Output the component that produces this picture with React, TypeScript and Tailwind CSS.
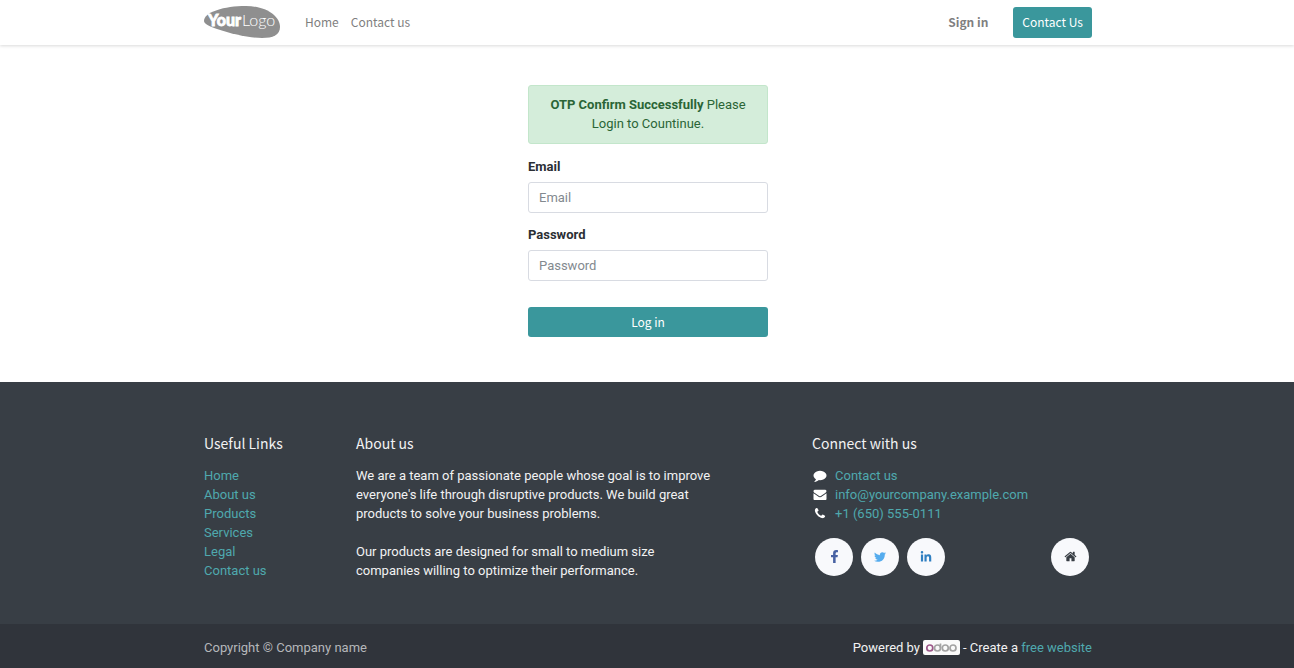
import React from 'react';
import { FaFacebookF, FaLinkedinIn, FaTwitter } from 'react-icons/fa';

interface IconProps {
  className?: string;
}

const usefulLinks = ['Home', 'About us', 'Products', 'Services', 'Legal', 'Contact us'];

const CommentIcon: React.FC<IconProps> = ({ className }) => (
  <svg className={className} viewBox="0 0 1792 1792" fill="currentColor" aria-hidden="true">
    <path d="M1792 896q0 174-120 321.5t-326 233-450 85.5q-70 0-145-8-198 175-460 242-49 14-114 22h-5q-15 0-27-10.5t-16-27.5v-1q-3-4-.5-12t2-10 4.5-9.5l6-9 7-8.5 8-9q7-8 31-34.5t34.5-38 31-39.5 32.5-51 27-59 26-76q-157-89-247.5-220t-90.5-281q0-174 120-321.5t326-233 450-85.5 450 85.5 326 233 120 321.5z" />
  </svg>
);

const EnvelopeIcon: React.FC<IconProps> = ({ className }) => (
  <svg className={className} viewBox="0 0 1792 1792" fill="currentColor" aria-hidden="true">
    <path d="M1792 710v794q0 66-47 113t-113 47h-1472q-66 0-113-47t-47-113v-794q44 49 101 87 362 246 497 345 57 42 92.5 65.5t94.5 48 110 24.5h2q51 0 110-24.5t94.5-48 92.5-65.5q170-123 498-345 57-39 100-87zm0-294q0 79-49 151t-122 123q-376 261-468 325-10 7-42.5 31t-54 38.5-52 32.5-57.5 27-50 9h-2q-23 0-50-9t-57.5-27-52-32.5-54-38.5-42.5-31q-91-64-262-182.5t-205-142.5q-62-42-117-115.5t-55-136.5q0-78 41.5-130t118.5-52h1472q65 0 112.5 47t47.5 113z" />
  </svg>
);

const PhoneIcon: React.FC<IconProps> = ({ className }) => (
  <svg className={className} viewBox="0 0 1792 1792" fill="currentColor" aria-hidden="true">
    <path d="M1600 1240q0 27-10 70.5t-21 68.5q-21 50-122 106-94 51-186 51-27 0-53-3.5t-57.5-12.5-47-14.5-55.5-20.5-49-18q-98-35-175-83-127-79-264-216t-216-264q-48-77-83-175-3-9-18-49t-20.5-55.5-14.5-47-12.5-57.5-3.5-53q0-92 51-186 56-101 106-122 25-11 68.5-21t70.5-10q14 0 21 3 18 6 53 76 11 19 30 54t35 63.5 31 53.5q3 4 17.5 25t21.5 35.5 7 28.5q0 20-28.5 50t-62 55-62 53-28.5 46q0 9 5 22.5t8.5 20.5 14 24 11.5 19q76 137 174 235t235 174q2 1 19 11.5t24 14 20.5 8.5 22.5 5q18 0 46-28.5t53-62 55-62 50-28.5q14 0 28.5 7t35.5 21.5 25 17.5q25 15 53.5 31t63.5 35 54 30q70 35 76 53 3 7 3 21z" />
  </svg>
);

const HomeIcon: React.FC<IconProps> = ({ className }) => (
  <svg className={className} viewBox="0 0 1792 1792" fill="currentColor" aria-hidden="true">
    <path d="M1472 992v480q0 26-19 45t-45 19h-384v-384h-256v384h-384q-26 0-45-19t-19-45v-480q0-1 .5-3t.5-3l575-474 575 474q1 2 1 6zm223-69l-62 74q-8 9-21 11h-3q-13 0-21-7l-692-577-692 577q-12 8-24 7-13-2-21-11l-62-74q-8-10-7-23.5t11-21.5l719-599q32-26 76-26t76 26l244 204v-195q0-14 9-23t23-9h192q14 0 23 9t9 23v408l219 182q10 8 11 21.5t-7 23.5z" />
  </svg>
);

const Logo: React.FC = () => (
  <svg className="w-[76px] h-8" viewBox="0 0 76 32" role="img" aria-label="Your Logo">
    <path d="M0 15C0 6 20 0 42 0C62 0 76 10 76 21C76 29 69 32 58 32C45 32 28 28 13 23C5 20 0 18 0 15Z" fill="#8f8f8f" />
    <text x="4" y="20" fill="#fff" stroke="#fff" strokeWidth="0.8" fontFamily="Lato, sans-serif" fontWeight="900" fontSize="16">Your</text>
    <text x="38" y="20" fill="#fff" fontFamily="Lato, sans-serif" fontWeight="300" fontSize="16">Logo</text>
  </svg>
);

const OdooBadge: React.FC = () => (
  <svg className="w-[37px] h-[15px]" viewBox="0 0 37 15" role="img" aria-label="odoo">
    <rect width="37" height="15" rx="2" fill="#fafafa" />
    <g fill="none" strokeWidth="1.7">
      <circle cx="6.8" cy="8" r="3" stroke="#9c5789" />
      <g stroke="#a3a3a3">
        <circle cx="14.5" cy="8" r="3" />
        <path d="M17.500 3.500v4.500" />
        <circle cx="22.300" cy="8" r="3" />
        <circle cx="30" cy="8" r="3" />
      </g>
    </g>
  </svg>
);

const Header: React.FC = () => (
  <header className="bg-white shadow-[0_1px_3px_rgba(0,0,0,0.15)]">
    <div className="max-w-[914px] mx-auto pl-[14px] pr-3 pb-px h-[45px] flex items-center font-['Noto_Sans_CJK_SC',sans-serif] text-xs text-[#7f7f7f]">
      <a href="#home" className="mr-[25px]"><Logo /></a>
      <nav className="flex gap-3">
        <a href="#home">Home</a>
        <a href="#contact">Contact us</a>
      </nav>
      <a href="#signin" className="ml-auto font-bold">Sign in</a>
      <a href="#contact" className="ml-[25px] px-[9px] h-[31px] flex items-center rounded-[3px] bg-[#3a979c] text-white">Contact Us</a>
    </div>
  </header>
);

interface FieldProps {
  id: string;
  label: string;
  type: string;
}

const Field: React.FC<FieldProps> = ({ id, label, type }) => (
  <div className="mb-3">
    <label htmlFor={id} className="block mb-[6px] font-bold">{label}</label>
    <input
      id={id}
      type={type}
      placeholder={label}
      className="block w-full h-[31px] px-[10px] bg-white border border-[#d8dbe2] rounded-[3px] placeholder:text-[#83898f] outline-none focus:border-[#3a979c]"
    />
  </div>
);

const LoginForm: React.FC = () => (
  <form className="w-[242px] pl-[2px] mx-auto pt-10 pb-[45px]" onSubmit={(e) => e.preventDefault()}>
    <div role="status" className="px-5 pt-[9px] pb-[10px] mb-[13px] text-center bg-[#d4edda] border border-[#c3e6cb] rounded-[3px] text-[#2a6536]">
      <strong className="font-bold">OTP Confirm Successfully</strong> Please Login to Countinue.
    </div>
    <Field id="email" label="Email" type="email" />
    <Field id="password" label="Password" type="password" />
    <button type="submit" className="block w-full h-[30px] mt-[26px] rounded-[3px] bg-[#3a979c] text-white text-xs font-['Noto_Sans_CJK_SC',sans-serif]">
      Log in
    </button>
  </form>
);

interface HeadingProps {
  children: React.ReactNode;
}

const FooterHeading: React.FC<HeadingProps> = ({ children }) => (
  <h2 className="mb-3 text-sm leading-[22px] font-['Noto_Sans_CJK_SC',sans-serif]">{children}</h2>
);

const circle = 'size-[38px] rounded-full bg-[#f8f9fc] flex items-center justify-center pb-px';

const Footer: React.FC = () => (
  <footer className="grow flex flex-col bg-[#383e45] text-[#f2f2f3]">
    <div className="w-full max-w-[914px] mx-auto pl-[2px] pt-[50px] pb-[44px] grid grid-cols-6">
      <div className="px-3">
        <FooterHeading>Useful Links</FooterHeading>
        <ul className="text-[#4fa9ae]">
          {usefulLinks.map(link => (
            <li key={link}><a href="#links">{link}</a></li>
          ))}
        </ul>
      </div>
      <div className="col-span-3 px-3">
        <FooterHeading>About us</FooterHeading>
        <p className="max-w-[360px] mb-[19px]">
          We are a team of passionate people whose goal is to improve everyone's life through disruptive products. We build great products to solve your business problems.
        </p>
        <p className="max-w-[320px]">
          Our products are designed for small to medium size companies willing to optimize their performance.
        </p>
      </div>
      <div className="col-span-2 px-3">
        <FooterHeading>Connect with us</FooterHeading>
        <ul className="mb-[15px] text-[#4fa9ae]">
          <li className="flex items-center gap-[7px]">
            <CommentIcon className="w-4 h-[13px] text-white" />
            <a href="#contact">Contact us</a>
          </li>
          <li className="flex items-center gap-[7px]">
            <EnvelopeIcon className="w-4 h-[13px] text-white" />
            <a href="#mail">info@yourcompany.example.com</a>
          </li>
          <li className="flex items-center gap-[7px]">
            <PhoneIcon className="w-4 h-[13px] text-white" />
            <a href="#phone">+1 (650) 555-0111</a>
          </li>
        </ul>
        <div className="flex gap-2 px-[3px]">
          <a href="#facebook" aria-label="Facebook" className={circle}><FaFacebookF className="size-[13px] text-[#4862a3]" /></a>
          <a href="#twitter" aria-label="Twitter" className={circle}><FaTwitter className="size-3 text-[#55acee]" /></a>
          <a href="#linkedin" aria-label="LinkedIn" className={circle}><FaLinkedinIn className="size-3 text-[#2f7fc1]" /></a>
          <a href="#home" aria-label="Home" className={`${circle} ml-auto`}><HomeIcon className="size-[13px] text-[#383e45]" /></a>
        </div>
      </div>
    </div>
    <div className="grow bg-[#30343b]">
      <div className="max-w-[914px] mx-auto pl-[14px] pr-3 pt-[14px] pb-[11px] flex justify-between">
        <span className="text-[#b5b7ba]">Copyright © Company name</span>
        <div className="flex items-center gap-[3px]">
          <span>Powered by</span>
          <OdooBadge />
          <span>- Create a <a href="#website" className="text-[#4fa9ae]">free website</a></span>
        </div>
      </div>
    </div>
  </footer>
);

const App: React.FC = () => (
  <div className="min-h-screen flex flex-col bg-white font-[Roboto,sans-serif] text-[13px] leading-[19px] text-[#2b2f34]">
    <Header />
    <main>
      <LoginForm />
    </main>
    <Footer />
  </div>
);

export default App;
